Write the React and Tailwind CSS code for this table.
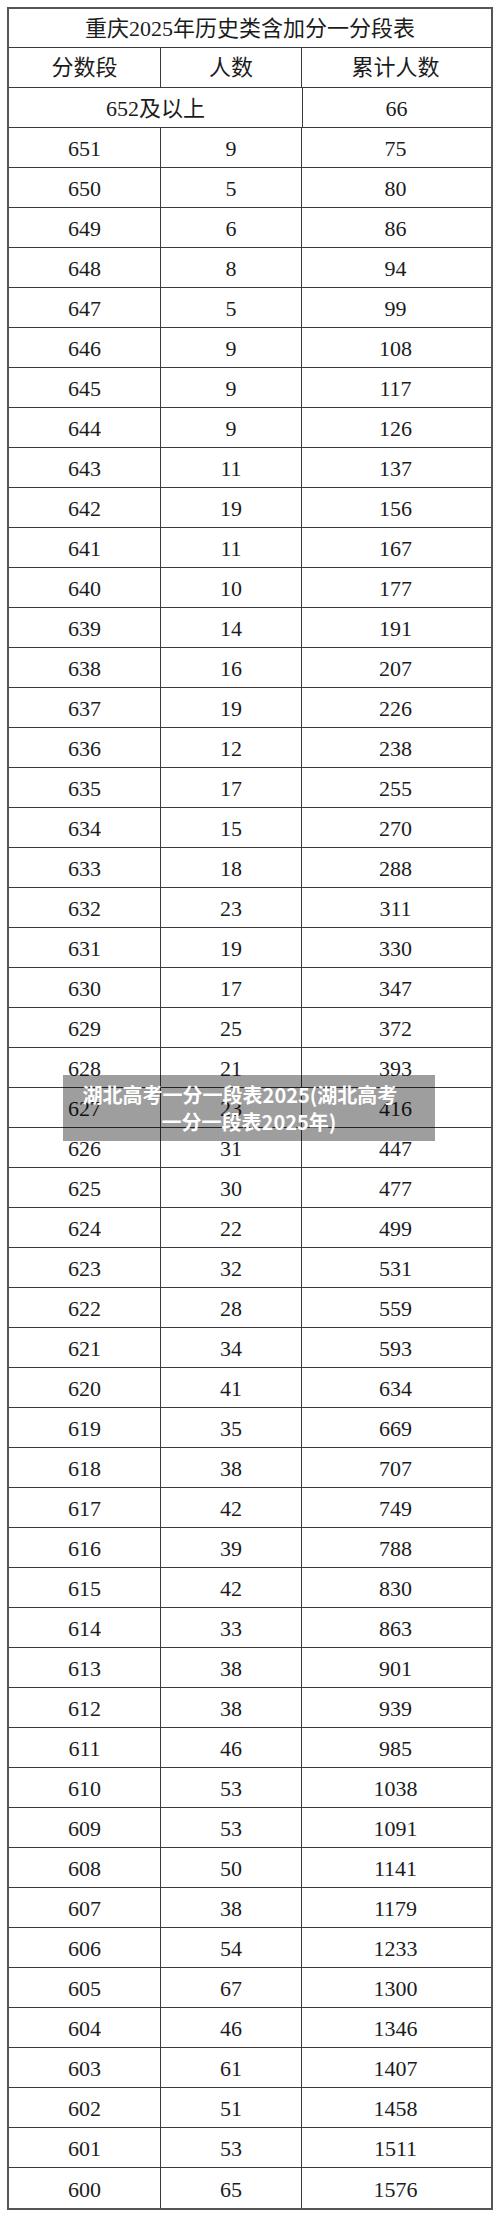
const rows = [
  [651, 9, 75], [650, 5, 80], [649, 6, 86], [648, 8, 94], [647, 5, 99],
  [646, 9, 108], [645, 9, 117], [644, 9, 126], [643, 11, 137], [642, 19, 156],
  [641, 11, 167], [640, 10, 177], [639, 14, 191], [638, 16, 207], [637, 19, 226],
  [636, 12, 238], [635, 17, 255], [634, 15, 270], [633, 18, 288], [632, 23, 311],
  [631, 19, 330], [630, 17, 347], [629, 25, 372], [628, 21, 393], [627, 23, 416],
  [626, 31, 447], [625, 30, 477], [624, 22, 499], [623, 32, 531], [622, 28, 559],
  [621, 34, 593], [620, 41, 634], [619, 35, 669], [618, 38, 707], [617, 42, 749],
  [616, 39, 788], [615, 42, 830], [614, 33, 863], [613, 38, 901], [612, 38, 939],
  [611, 46, 985], [610, 53, 1038], [609, 53, 1091], [608, 50, 1141], [607, 38, 1179],
  [606, 54, 1233], [605, 67, 1300], [604, 46, 1346], [603, 61, 1407], [602, 51, 1458],
  [601, 53, 1511], [600, 65, 1576],
];

const Row = ({ cells, last }) => (
  <div className={`flex h-[40px] ${last ? "" : "border-b border-[#3a3a3a]"}`}>
    <div className="w-[152px] flex items-center justify-center border-r border-[#3a3a3a] pt-[3px]">{cells[0]}</div>
    <div className="w-[141px] flex items-center justify-center border-r border-[#3a3a3a] pt-[3px]">{cells[1]}</div>
    <div className="w-[187px] flex items-center justify-center pt-[3px]">{cells[2]}</div>
  </div>
);

export default function App() {
  return (
    <div className="relative w-[500px] h-[2217px] bg-white pt-[7px] pl-[7px]" style={{ fontFamily: '"Liberation Serif", "Noto Sans CJK SC", serif' }}>
      <div className="w-[486px] border-2 border-[#555] text-[22px] text-[#1c1c1c] leading-none">
        {/* title */}
        <div className="h-[39px] flex items-center justify-center border-b border-[#3a3a3a] pt-[2px]">
          重庆2025年历史类含加分一分段表
        </div>
        {/* header */}
        <div className="flex h-[40px] border-b border-[#3a3a3a]">
          <div className="w-[152px] flex items-center justify-center border-r border-[#3a3a3a]">分数段</div>
          <div className="w-[141px] flex items-center justify-center border-r border-[#3a3a3a]">人数</div>
          <div className="w-[187px] flex items-center justify-center">累计人数</div>
        </div>
        <div className="flex h-[40px] border-b border-[#3a3a3a]">
          <div className="w-[294px] flex items-center justify-center border-r border-[#3a3a3a] pt-[2px]">652及以上</div>
          <div className="w-[187px] flex items-center justify-center pt-[3px]">66</div>
        </div>
        {rows.map((r, i) => (
          <Row key={r[0]} cells={r} last={i === rows.length - 1} />
        ))}
      </div>

      {/* watermark caption */}
      <div
        className="absolute left-[63px] top-[1075px] w-[372px] h-[66px] bg-[rgba(0,0,0,0.38)] flex flex-col items-center justify-center text-white font-bold text-[20px] leading-[27px]"
        style={{ fontFamily: '"Noto Sans CJK SC", sans-serif' }}
      >
        <span className="pr-[18px]">湖北高考一分一段表2025(湖北高考</span>
        <span>一分一段表2025年)</span>
      </div>
    </div>
  );
}
